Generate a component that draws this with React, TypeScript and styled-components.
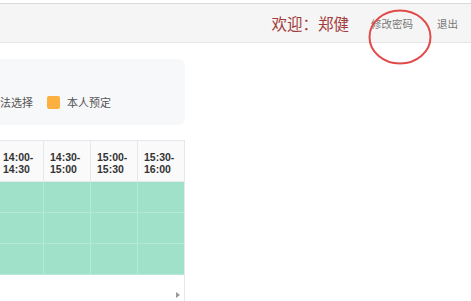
import React from 'react';
import styled, { createGlobalStyle } from 'styled-components';

const GlobalStyle = createGlobalStyle`
  html, body {
    margin: 0;
    padding: 0;
    background: #fff;
    overflow: hidden;
  }
  body {
    font-family: "Liberation Sans", "Noto Sans CJK SC", sans-serif;
    width: 471px;
    height: 301px;
  }
`;

const COLS = ['13:00-13:30', '13:30-14:00', '14:00-14:30', '14:30-15:00', '15:00-15:30', '15:30-16:00'];
const ROWS = 3;

const LEGEND = [
  { label: '已预定', color: '#a0e1c9' },
  { label: '无法选择', color: '#d9d9d9' },
  { label: '本人预定', color: '#fbb040' },
];

function App() {
  return (
    <Page>
      <GlobalStyle />
      <Header>
        <Welcome>欢迎：郑健</Welcome>
        <HeaderLink>
          修改密码
          <Circle width="66" height="58" viewBox="0 0 66 58">
            <ellipse cx="33" cy="29" rx="30.5" ry="26.5" fill="none" stroke="#e24a4a" strokeWidth="2" />
          </Circle>
        </HeaderLink>
        <HeaderLink>退出</HeaderLink>
      </Header>
      <Content>
        <Card>
          <Legend>
            {LEGEND.map((l) => (
              <LegendItem key={l.label}>
                <Swatch $color={l.color} />
                {l.label}
              </LegendItem>
            ))}
          </Legend>
        </Card>
        <TableWrap>
          <Grid $cols={COLS.length}>
            {COLS.map((c) => {
              const [a, b] = c.split('-');
              return (
                <HeadCell key={c}>
                  {a}-<br />
                  {b}
                </HeadCell>
              );
            })}
            {Array.from({ length: ROWS * COLS.length }).map((_, i) => (
              <SlotCell key={i} />
            ))}
          </Grid>
          <ScrollBar>
            <Arrow />
          </ScrollBar>
        </TableWrap>
      </Content>
    </Page>
  );
}

export default App;

const Page = styled.div`
  width: 471px;
  height: 301px;
  padding-top: 3px;
  box-sizing: border-box;
  display: flex;
  flex-direction: column;
`;

const Header = styled.div`
  height: 38px;
  border-top: 1px solid #dadada;
  border-bottom: 1px solid #e6e6e6;
  background: #f5f5f5;
  display: flex;
  align-items: center;
  justify-content: flex-end;
  padding-right: 13px;
  font-family: "Noto Sans CJK SC", sans-serif;
`;

const Welcome = styled.span`
  font-size: 15.5px;
  color: #a23c3c;
  margin-right: 22px;
`;

const HeaderLink = styled.span`
  position: relative;
  font-size: 10.5px;
  color: #777;
  & + & {
    margin-left: 24px;
  }
`;

const Circle = styled.svg`
  position: absolute;
  left: -4px;
  top: -8px;
  pointer-events: none;
`;

const Content = styled.div`
  margin-left: -98px;
  width: 283px;
  display: flex;
  flex-direction: column;
  flex: 1;
`;

const Card = styled.div`
  margin-top: 16px;
  height: 66px;
  background: #f7f8fa;
  border-radius: 0 6px 6px 0;
  display: flex;
  align-items: flex-end;
  padding-bottom: 15px;
  box-sizing: border-box;
`;

const Legend = styled.div`
  display: flex;
  gap: 14px;
  font-family: "Noto Sans CJK SC", sans-serif;
  font-size: 11px;
  color: #555;
`;

const LegendItem = styled.div`
  display: flex;
  align-items: center;
  gap: 7px;
  white-space: nowrap;
`;

const Swatch = styled.span<{ $color: string }>`
  width: 13px;
  height: 13px;
  border-radius: 2px;
  background: ${(p) => p.$color};
`;

const TableWrap = styled.div`
  margin-top: 15px;
  flex: 1;
  border-top: 1px solid #e4e7ed;
  border-right: 1px solid #e4e7ed;
  display: flex;
  flex-direction: column;
`;

const Grid = styled.div<{ $cols: number }>`
  display: grid;
  grid-template-columns: repeat(${(p) => p.$cols}, 47px);
  grid-template-rows: 41px repeat(${ROWS}, 31px);
`;

const HeadCell = styled.div`
  box-sizing: border-box;
  border-left: 1px solid #e4e7ed;
  border-bottom: 1px solid #e4e7ed;
  background: #fafafa;
  padding: 10px 0 0 6px;
  font-size: 10.5px;
  line-height: 12px;
  font-weight: bold;
  color: #333;
`;

const SlotCell = styled.div`
  box-sizing: border-box;
  background: #a0e1c9;
  border-left: 1px solid #b8e9d7;
  border-bottom: 1px solid #b8e9d7;
`;

const ScrollBar = styled.div`
  flex: 1;
  display: flex;
  justify-content: flex-end;
  align-items: flex-end;
  padding: 0 4px 3px 0;
`;

const Arrow = styled.span`
  width: 0;
  height: 0;
  border-top: 3px solid transparent;
  border-bottom: 3px solid transparent;
  border-left: 4px solid #999;
`;
